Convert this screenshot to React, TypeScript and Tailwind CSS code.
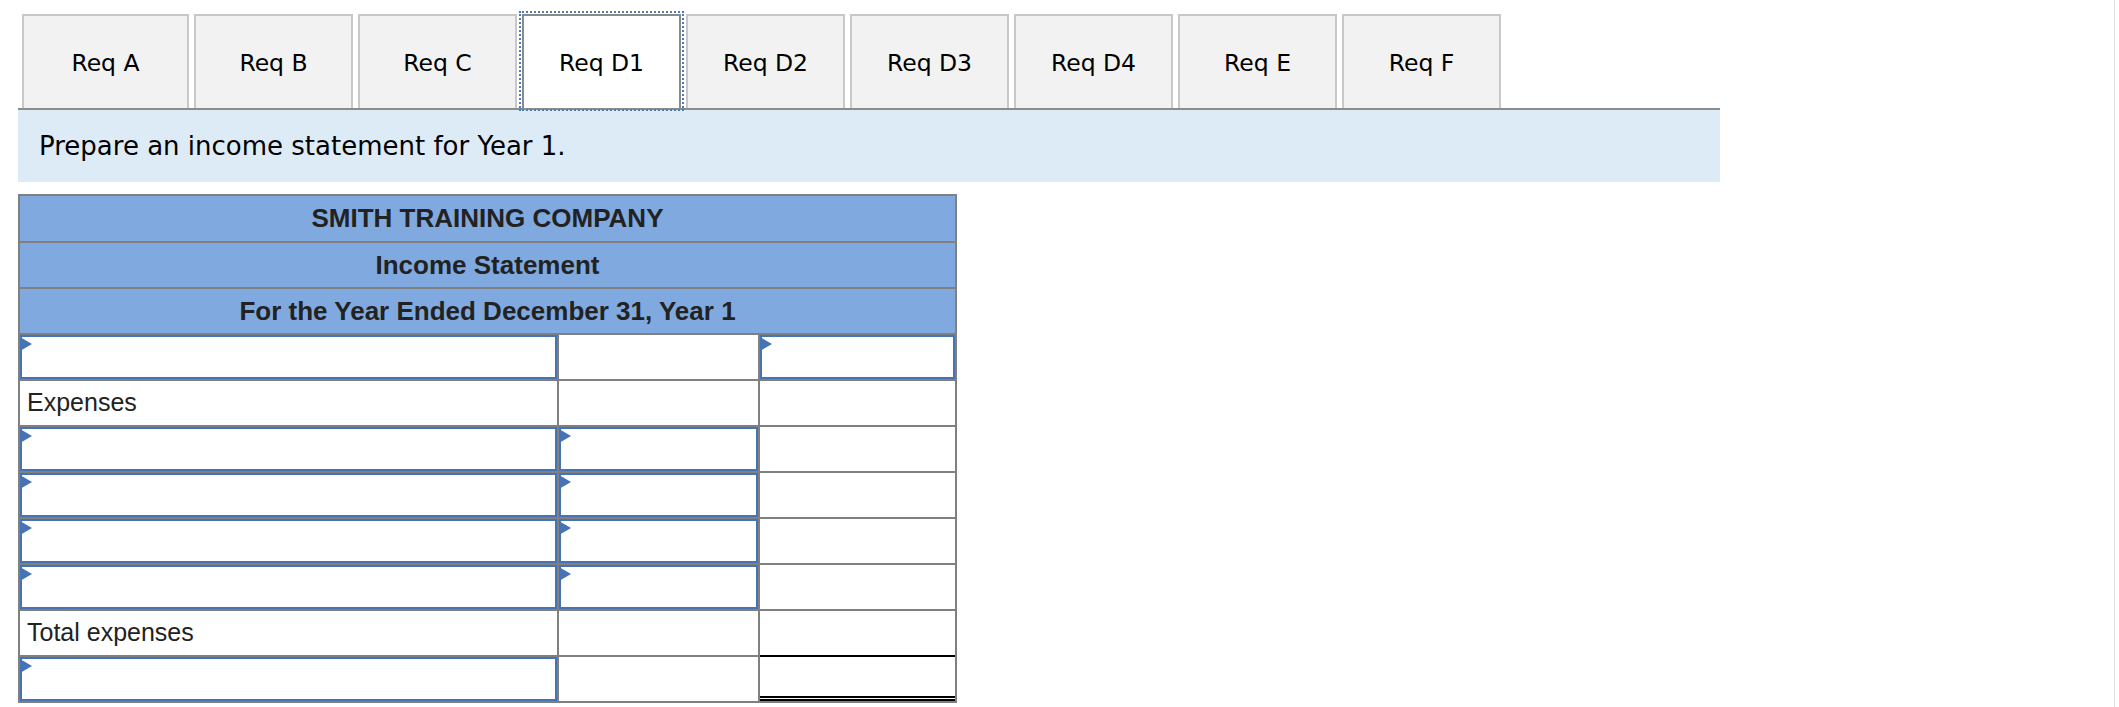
import React from 'react';

type CellKind = 'input' | 'empty' | 'total' | { label: string };

const tabs = ['Req A', 'Req B', 'Req C', 'Req D1', 'Req D2', 'Req D3', 'Req D4', 'Req E', 'Req F'];
const activeTab = 'Req D1';

const bodyRows: CellKind[][] = [
  ['input', 'empty', 'input'],
  [{ label: 'Expenses' }, 'empty', 'empty'],
  ['input', 'input', 'empty'],
  ['input', 'input', 'empty'],
  ['input', 'input', 'empty'],
  ['input', 'input', 'empty'],
  [{ label: 'Total expenses' }, 'empty', 'empty'],
  ['input', 'empty', 'total'],
];

const colWidths = ['w-[539px] border-r-2', 'w-[201px] border-r-2', 'flex-1'];

const InputBox = () => (
  <div className="relative h-full border-2 border-[#4673b5] bg-white">
    {/* little marker in the corner */}
    <span className="absolute -left-[2px] top-0 h-0 w-0 border-y-[7px] border-l-[12px] border-y-transparent border-l-[#4673b5]" />
  </div>
);

const Cell = ({ kind, col }: { kind: CellKind; col: number }) => {
  const isTotal = kind === 'total';
  return (
    <div
      className={`h-full border-t-2 ${colWidths[col]} ${
        isTotal ? 'border-t-black border-b-[5px] border-b-black border-double' : ''
      } border-[#808080]`}
    >
      {kind === 'input' && <InputBox />}
      {typeof kind === 'object' && (
        <div className="flex h-full items-center pl-[7px] text-[25px] text-[#222]">{kind.label}</div>
      )}
    </div>
  );
};

const HeaderRow = ({ text, first }: { text: string; first?: boolean }) => (
  <div
    className={`flex items-center justify-center bg-[#80aadf] text-[26px] font-bold text-[#222] ${
      first ? 'h-[45px]' : 'h-[46px] border-t-2 border-[#808080]'
    }`}
  >
    {text}
  </div>
);

export default function App() {
  return (
    <div className="h-[707px] w-[2115px] border-r border-[#e3e3e3] bg-white pl-[18px] pt-[14px]">
      {/* Tabs */}
      <div className="flex w-[1702px] gap-[5px] border-b-2 border-[#8c8c8c] pl-[4px] font-['DejaVu_Sans',Verdana,sans-serif]">
        {tabs.map((t, i) => {
          const active = t === activeTab;
          return (
            <div
              key={t}
              className={`flex h-[94px] items-center justify-center border-2 border-b-0 pt-[4px] text-[23.5px] text-black ${
                i === 0 ? 'w-[167px]' : 'w-[159px]'
              } ${
                active
                  ? 'border-[#8a8a8a] bg-white outline-2 outline-offset-[1px] outline-dotted outline-[#4a7cc0]'
                  : 'border-[#c8c8c8] bg-[#f2f2f2]'
              }`}
            >
              {t}
            </div>
          );
        })}
      </div>

      {/* Instruction */}
      <div className="flex h-[72px] w-[1702px] items-center bg-[#ddebf7] pl-[21px] font-['DejaVu_Sans',Verdana,sans-serif] text-[26px] text-black">
        Prepare an income statement for Year 1.
      </div>

      {/* Income statement */}
      <div className="mt-[12px] w-[939px] border-2 border-[#808080] font-['Liberation_Sans',Arial,sans-serif]">
        <HeaderRow text="SMITH TRAINING COMPANY" first />
        <HeaderRow text="Income Statement" />
        <HeaderRow text="For the Year Ended December 31, Year 1" />
        {bodyRows.map((row, r) => (
          <div key={r} className="flex h-[46px]">
            {row.map((kind, c) => (
              <Cell key={c} kind={kind} col={c} />
            ))}
          </div>
        ))}
      </div>
    </div>
  );
}
